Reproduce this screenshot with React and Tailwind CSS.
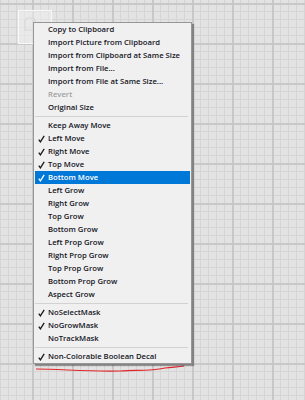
import React from "react";

function Check({ white }) {
  return (
    <svg width="7" height="8" viewBox="0 0 7 8" className="shrink-0">
      <path d="M0.8 4.6 L2.4 6.9 L6.2 0.8" fill="none" stroke={white ? "#ffffff" : "#1a1a1a"} strokeWidth="1.3" />
    </svg>
  );
}

function Item({ label, checked, active, disabled }) {
  return (
    <div
      className={
        "flex h-[13px] items-center " +
        (active ? "bg-[#0078d7] text-white" : disabled ? "text-[#a0a0a0]" : "text-[#15151f]")
      }
    >
      <div className="flex w-[13px] shrink-0 items-center justify-end pr-[3px]">
        {checked ? <Check white={active} /> : null}
      </div>
      <span className="leading-[13px] whitespace-nowrap">{label}</span>
    </div>
  );
}

function Sep() {
  return (
    <div className="flex h-[5px] items-center pr-[2px]">
      <div className="h-[1px] w-full bg-[#d2d2d2]" />
    </div>
  );
}

export default function App() {
  const g1 = [
    { label: "Copy to Clipboard" },
    { label: "Import Picture from Clipboard" },
    { label: "Import from Clipboard at Same Size" },
    { label: "Import from File..." },
    { label: "Import from File at Same Size..." },
    { label: "Revert", disabled: true },
    { label: "Original Size" },
  ];
  const g2 = [
    { label: "Keep Away Move" },
    { label: "Left Move", checked: true },
    { label: "Right Move", checked: true },
    { label: "Top Move", checked: true },
    { label: "Bottom Move", checked: true, active: true },
    { label: "Left Grow" },
    { label: "Right Grow" },
    { label: "Top Grow" },
    { label: "Bottom Grow" },
    { label: "Left Prop Grow" },
    { label: "Right Prop Grow" },
    { label: "Top Prop Grow" },
    { label: "Bottom Prop Grow" },
    { label: "Aspect Grow" },
  ];
  const g3 = [
    { label: "NoSelectMask", checked: true },
    { label: "NoGrowMask", checked: true },
    { label: "NoTrackMask" },
  ];
  return (
    <div className="relative h-[400px] w-[305px] overflow-hidden bg-[#e3e3e3] font-['Open_Sans',sans-serif] text-[7.7px] font-semibold">
      <svg className="absolute inset-0" width="305" height="400">
        <defs>
          <pattern id="minor" x="0" y="3" width="8" height="8" patternUnits="userSpaceOnUse">
            <rect x="0" y="0" width="1" height="8" fill="#d5d5d5" />
            <rect x="0" y="0" width="8" height="1" fill="#d5d5d5" />
          </pattern>
          <pattern id="major" x="32" y="3" width="40" height="40" patternUnits="userSpaceOnUse">
            <rect x="0" y="0" width="2" height="40" fill="#c8c8c8" />
            <rect x="0" y="0" width="40" height="2" fill="#c8c8c8" />
          </pattern>
        </defs>
        <rect width="305" height="400" fill="url(#minor)" />
        <rect width="305" height="400" fill="url(#major)" />
        <rect x="18.5" y="10.5" width="33" height="33" fill="#ececec" fillOpacity="0.6" stroke="#f8f8f8" strokeWidth="1" />
        <path d="M25 22 q0 -4 4 -4 h3 q3 0 3 3 v2 q2 0 2 2 q0 2 -2 2 v3 h-10 z" fill="none" stroke="#d8d8d8" strokeWidth="1.2" />
        <path d="M36 369 C60 369 90 372 120 371 C140 370 150 371 165 368 C172 367 178 367 184 366" fill="none" stroke="#e0262a" strokeWidth="1.2" />
      </svg>
      <div className="absolute left-[33px] top-[22px] w-[159px] border border-[#979797] bg-[#f0f0f0] px-[1px] shadow-[2px_2px_1px_rgba(0,0,0,0.35)]">
        {g1.map((it) => (
          <Item key={it.label} {...it} />
        ))}
        <Sep />
        {g2.map((it) => (
          <Item key={it.label} {...it} />
        ))}
        <Sep />
        {g3.map((it) => (
          <Item key={it.label} {...it} />
        ))}
        <Sep />
        <Item label="Non-Colorable Boolean Decal" checked />
      </div>
    </div>
  );
}
